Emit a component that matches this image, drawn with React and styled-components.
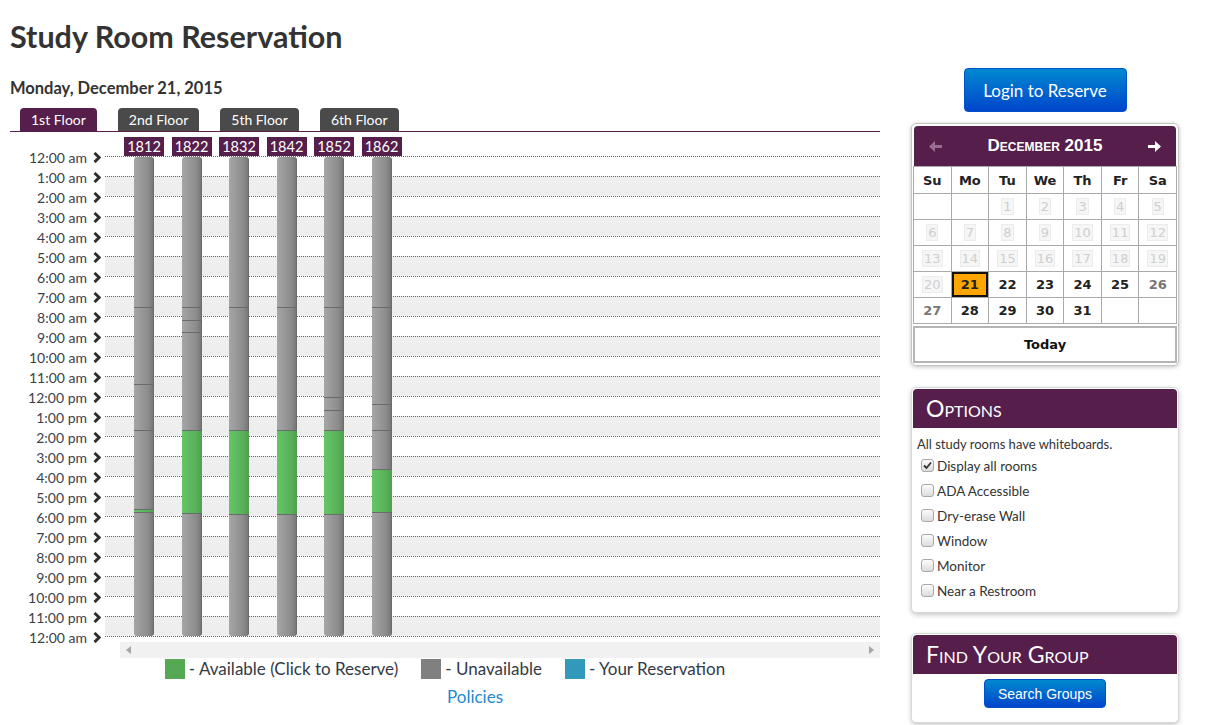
import React from 'react';
import styled, { createGlobalStyle } from 'styled-components';

const PURPLE = '#561e4b';
const FONT = 'Lato, "Open Sans", sans-serif';

const GlobalStyle = createGlobalStyle`
    body {
        margin: 0;
        background: #fff;
        color: #333;
        font-family: ${FONT};
    }
`;

const Page = styled.div`
    width: 1212px;
    height: 725px;
    overflow: hidden;
    padding: 0 10px;
    box-sizing: border-box;
`;

const Title = styled.h1`
    margin: 17px 0 0;
    font-size: 30.5px;
    line-height: 39px;
    font-weight: 700;
    color: #333;
`;

const Columns = styled.div`
    display: flex;
    align-items: flex-start;
`;

const LeftCol = styled.div`
    width: 870px;
`;

const RightCol = styled.div`
    width: 268px;
    margin-left: 31px;
    margin-top: 12px;
    display: flex;
    flex-direction: column;
    align-items: center;
`;

const DateLine = styled.h2`
    margin: 22px 0 0;
    font-size: 16.5px;
    line-height: 20px;
    font-weight: 700;
    color: #333;
`;

const Tabs = styled.div`
    display: flex;
    gap: 21px;
    padding-left: 10px;
    margin-top: 10px;
    border-bottom: 1px solid ${PURPLE};
`;

const Tab = styled.div`
    height: 23px;
    line-height: 23px;
    padding: 0 11px;
    font-size: 14px;
    color: #fff;
    border-radius: 4px 4px 0 0;
    background: ${p => (p.$active ? PURPLE : '#4a4a4a')};
`;

const Schedule = styled.div`
    display: flex;
    align-items: flex-start;
`;

const TimeCol = styled.div`
    width: 95px;
    height: 505px;
    box-sizing: border-box;
    padding-top: 15px;
`;

const TimeLabel = styled.div`
    height: 20px;
    display: flex;
    align-items: center;
    justify-content: flex-end;
    padding-right: 4px;
    font-size: 14px;
    color: #3c3f4a;

    svg {
        margin-left: 6px;
    }
`;

const ChartArea = styled.div`
    flex: 1;
    position: relative;
    padding-top: 24px;
`;

const HourRow = styled.div`
    height: 20px;
    box-sizing: border-box;
    border-top: 1px dotted #666;
    background: ${p => (p.$shaded ? '#eeeeee' : 'transparent')};
`;

const EndLine = styled.div`
    border-top: 1px dotted #666;
`;

const Rooms = styled.div`
    position: absolute;
    top: 5px;
    left: 19px;
    display: flex;
    gap: 7.5px;
`;

const RoomCol = styled.div`
    width: 40px;
    display: flex;
    flex-direction: column;
    align-items: center;
`;

const RoomLabel = styled.div`
    width: 40px;
    height: 19px;
    line-height: 19px;
    text-align: center;
    background: ${PURPLE};
    color: #fff;
    font-size: 14.5px;
`;

const Bar = styled.div`
    width: 20px;
    height: 479px;
    margin-top: 1px;
    display: flex;
    flex-direction: column;
    border-radius: 3px;
    overflow: hidden;
`;

const Segment = styled.div`
    box-sizing: border-box;
    border-top: ${p => (p.$sep ? '1px solid #6a6a6a' : 'none')};
    background: ${p => (p.$green
        ? 'linear-gradient(to right, #66c566, #58b158 70%, #4e9f4e)'
        : 'linear-gradient(to right, #a6a6a6, #8c8c8c 70%, #7a7a7a 92%, #666)')};
`;

const Scrollbar = styled.div`
    margin: 5px 0 0 110px;
    width: 760px;
    height: 16px;
    background: #f1f1f1;
    display: flex;
    align-items: center;
    justify-content: space-between;
    padding: 0 6px;
    box-sizing: border-box;
`;

const Legend = styled.div`
    display: flex;
    justify-content: center;
    align-items: center;
    gap: 23px;
    margin-top: 1px;
    font-size: 17px;
    line-height: 20px;
    color: #333a45;
`;

const LegendItem = styled.div`
    display: flex;
    align-items: center;
    gap: 4px;
`;

const Swatch = styled.span`
    width: 20px;
    height: 20px;
    background: ${p => p.$color};
`;

const Policies = styled.a`
    display: block;
    text-align: center;
    padding-left: 60px;
    margin-top: 8px;
    font-size: 17px;
    line-height: 20px;
    color: #2489d1;
    text-decoration: none;
`;

const BlueButton = styled.button`
    border: 1px solid #0050c8;
    border-radius: 4px;
    color: #fff;
    background: linear-gradient(#0089cf, #0045cc);
    cursor: pointer;
    padding: 0;
`;

const LoginButton = styled(BlueButton)`
    width: 163px;
    height: 44px;
    font-family: ${FONT};
    font-size: 17px;
`;

const Calendar = styled.div`
    width: 268px;
    box-sizing: border-box;
    margin-top: 11px;
    border: 1px solid #c4c4c4;
    border-radius: 5px;
    padding: 2px 1px 2px 1px;
    box-shadow: 0 1px 4px rgba(0, 0, 0, 0.25);
    font-family: "DejaVu Sans", Verdana, sans-serif;
`;

const CalHeader = styled.div`
    height: 40px;
    margin: 0 1px;
    display: flex;
    align-items: center;
    justify-content: space-between;
    padding: 0 15px;
    background: ${PURPLE};
    border-radius: 4px 4px 0 0;
`;

const MonthTitle = styled.div`
    font-family: "Liberation Sans", Arial, sans-serif;
    font-weight: 700;
    font-size: 17px;
    font-variant: small-caps;
    color: #fff;
`;

const DayGrid = styled.div`
    display: grid;
    grid-template-columns: repeat(7, 1fr);
    gap: 1px;
    padding: 1px;
    background: #aaa;
`;

const DayHead = styled.div`
    height: 26px;
    background: #fff;
    display: flex;
    align-items: center;
    justify-content: center;
    font-weight: 700;
    font-size: 13px;
    color: #222;
`;

const DayCell = styled.div`
    height: 25px;
    box-sizing: border-box;
    display: flex;
    align-items: center;
    justify-content: center;
    font-size: 13px;
    font-weight: 700;
    background: ${p => (p.$selected ? '#ffa500' : '#fff')};
    border: ${p => (p.$selected ? '2px solid #111' : 'none')};
    color: ${p => (p.$weekend ? '#777' : '#222')};
`;

const DisabledDay = styled.span`
    font-weight: 400;
    color: #cfcfcf;
    background: #f6f6f6;
    border: 1px solid #ececec;
    padding: 0 1px;
    line-height: 15px;
`;

const TodayButton = styled.div`
    margin: 2px 0 0;
    height: 37px;
    box-sizing: border-box;
    border: 2px solid #b5b5b5;
    display: flex;
    align-items: center;
    justify-content: center;
    font-size: 13px;
    font-weight: 700;
    color: #111;
`;

const Panel = styled.div`
    width: 268px;
    box-sizing: border-box;
    margin-top: ${p => p.$top}px;
    border: 1px solid #d8d8d8;
    border-radius: 5px;
    padding: 1px;
    background: #fff;
    box-shadow: 0 2px 5px rgba(0, 0, 0, 0.22);
`;

const PanelHeader = styled.div`
    height: 39px;
    line-height: 39px;
    padding-left: 13px;
    background: ${PURPLE};
    border-radius: 4px 4px 0 0;
    color: #fff;
    font-size: 23px;
    font-variant: small-caps;
`;

const PanelBody = styled.div`
    padding: ${p => p.$pad};
    font-size: 13px;
    color: #333;
    text-align: ${p => p.$align || 'left'};
`;

const Note = styled.div`
    line-height: 18px;
    padding-left: 2px;
`;

const OptionRow = styled.label`
    height: 25px;
    display: flex;
    align-items: center;
    gap: 3px;
    padding-left: 6px;
    font-size: 13.5px;
`;

const Box = styled.span`
    width: 11px;
    height: 11px;
    border: 1px solid #a9a9a9;
    border-radius: 3px;
    background: linear-gradient(#fcfcfc, #dcdcdc);
    display: flex;
    align-items: center;
    justify-content: center;
`;

const SearchButton = styled(BlueButton)`
    width: 122px;
    height: 29px;
    font-family: "Liberation Sans", Arial, sans-serif;
    font-size: 14px;
`;

const Chevron = () => (
    <svg width="8" height="11" viewBox="0 0 8 11">
        <path d="M1.5 1 L6.2 5.5 L1.5 10" fill="none" stroke="#2e2e2e" strokeWidth="3" />
    </svg>
);

const Arrow = ({ dir, color }) => (
    <svg width="13" height="11" viewBox="0 0 13 11">
        <g transform={dir === 'left' ? 'translate(13 0) scale(-1 1)' : undefined} fill={color}>
            <rect x="0" y="4" width="8" height="3" />
            <path d="M7 0 L13 5.5 L7 11 Z" />
        </g>
    </svg>
);

const Tri = ({ dir }) => (
    <svg width="5" height="8" viewBox="0 0 5 8">
        <path d={dir === 'left' ? 'M5 0 L0 4 L5 8 Z' : 'M0 0 L5 4 L0 8 Z'} fill="#a5a5a5" />
    </svg>
);

const Check = ({ checked }) => (
    <Box>
        {checked && (
            <svg width="9" height="9" viewBox="0 0 9 9">
                <path d="M1 4.5 L3.5 7 L8 1.5" fill="none" stroke="#333" strokeWidth="1.8" />
            </svg>
        )}
    </Box>
);

const hourLabel = (h) => {
    const hr = h % 12 === 0 ? 12 : h % 12;
    const ampm = h % 24 < 12 ? 'am' : 'pm';
    return `${hr}:00 ${ampm}`;
};

// segment boundaries in px from the 12:00 am line (20px per hour)
const rooms = [
    { name: '1812', segs: [[0, 151], [151, 228], [228, 274], [274, 353], [353, 356, true], [356, 480]] },
    { name: '1822', segs: [[0, 151], [151, 164], [164, 176], [176, 274], [274, 357, true], [357, 480]] },
    { name: '1832', segs: [[0, 151], [151, 274], [274, 358, true], [358, 480]] },
    { name: '1842', segs: [[0, 151], [151, 274], [274, 358, true], [358, 480]] },
    { name: '1852', segs: [[0, 151], [151, 241], [241, 254], [254, 274], [274, 358, true], [358, 480]] },
    { name: '1862', segs: [[0, 151], [151, 248], [248, 274], [274, 313], [313, 356, true], [356, 480]] },
];

const weeks = [
    [null, null, 1, 2, 3, 4, 5],
    [6, 7, 8, 9, 10, 11, 12],
    [13, 14, 15, 16, 17, 18, 19],
    [20, 21, 22, 23, 24, 25, 26],
    [27, 28, 29, 30, 31, null, null],
];

const options = [
    ['Display all rooms', true],
    ['ADA Accessible', false],
    ['Dry-erase Wall', false],
    ['Window', false],
    ['Monitor', false],
    ['Near a Restroom', false],
];

const App = () => {
    const hours = Array.from({ length: 25 }, (_, i) => i);

    return (
        <>
            <GlobalStyle />
            <Page>
                <Title>Study Room Reservation</Title>
                <Columns>
                    <LeftCol>
                        <DateLine>Monday, December 21, 2015</DateLine>
                        <Tabs>
                            <Tab $active>1st Floor</Tab>
                            <Tab>2nd Floor</Tab>
                            <Tab>5th Floor</Tab>
                            <Tab>6th Floor</Tab>
                        </Tabs>
                        <Schedule>
                            <TimeCol>
                                {hours.map(h => (
                                    <TimeLabel key={h}>
                                        {hourLabel(h)}
                                        <Chevron />
                                    </TimeLabel>
                                ))}
                            </TimeCol>
                            <ChartArea>
                                {hours.slice(0, 24).map(h => (
                                    <HourRow key={h} $shaded={h % 2 === 1} />
                                ))}
                                <EndLine />
                                <Rooms>
                                    {rooms.map(room => (
                                        <RoomCol key={room.name}>
                                            <RoomLabel>{room.name}</RoomLabel>
                                            <Bar>
                                                {room.segs.map(([from, to, green], i) => (
                                                    <Segment
                                                        key={i}
                                                        $green={green}
                                                        $sep={i > 0}
                                                        style={{ height: to - from - (i === 0 ? 1 : 0) }}
                                                    />
                                                ))}
                                            </Bar>
                                        </RoomCol>
                                    ))}
                                </Rooms>
                            </ChartArea>
                        </Schedule>
                        <Scrollbar>
                            <Tri dir="left" />
                            <Tri dir="right" />
                        </Scrollbar>
                        <Legend>
                            <LegendItem><Swatch $color="#55a955" />- Available (Click to Reserve)</LegendItem>
                            <LegendItem><Swatch $color="#808080" />- Unavailable</LegendItem>
                            <LegendItem><Swatch $color="#3399bb" />- Your Reservation</LegendItem>
                        </Legend>
                        <Policies href="#">Policies</Policies>
                    </LeftCol>

                    <RightCol>
                        <LoginButton>Login to Reserve</LoginButton>
                        <Calendar>
                            <CalHeader>
                                <Arrow dir="left" color="#9a6c90" />
                                <MonthTitle>December 2015</MonthTitle>
                                <Arrow dir="right" color="#fff" />
                            </CalHeader>
                            <DayGrid>
                                {['Su', 'Mo', 'Tu', 'We', 'Th', 'Fr', 'Sa'].map(d => (
                                    <DayHead key={d}>{d}</DayHead>
                                ))}
                                {weeks.flat().map((d, i) => (
                                    <DayCell key={i} $selected={d === 21} $weekend={i % 7 === 0 || i % 7 === 6}>
                                        {d && (d < 21 ? <DisabledDay>{d}</DisabledDay> : d)}
                                    </DayCell>
                                ))}
                            </DayGrid>
                            <TodayButton>Today</TodayButton>
                        </Calendar>

                        <Panel $top={21}>
                            <PanelHeader>Options</PanelHeader>
                            <PanelBody $pad="7px 2px 8px">
                                <Note>All study rooms have whiteboards.</Note>
                                {options.map(([label, checked]) => (
                                    <OptionRow key={label}>
                                        <Check checked={checked} />
                                        {label}
                                    </OptionRow>
                                ))}
                            </PanelBody>
                        </Panel>

                        <Panel $top={20}>
                            <PanelHeader>Find Your Group</PanelHeader>
                            <PanelBody $pad="5px 0 13px" $align="center">
                                <SearchButton>Search Groups</SearchButton>
                            </PanelBody>
                        </Panel>
                    </RightCol>
                </Columns>
            </Page>
        </>
    );
};

export default App;
